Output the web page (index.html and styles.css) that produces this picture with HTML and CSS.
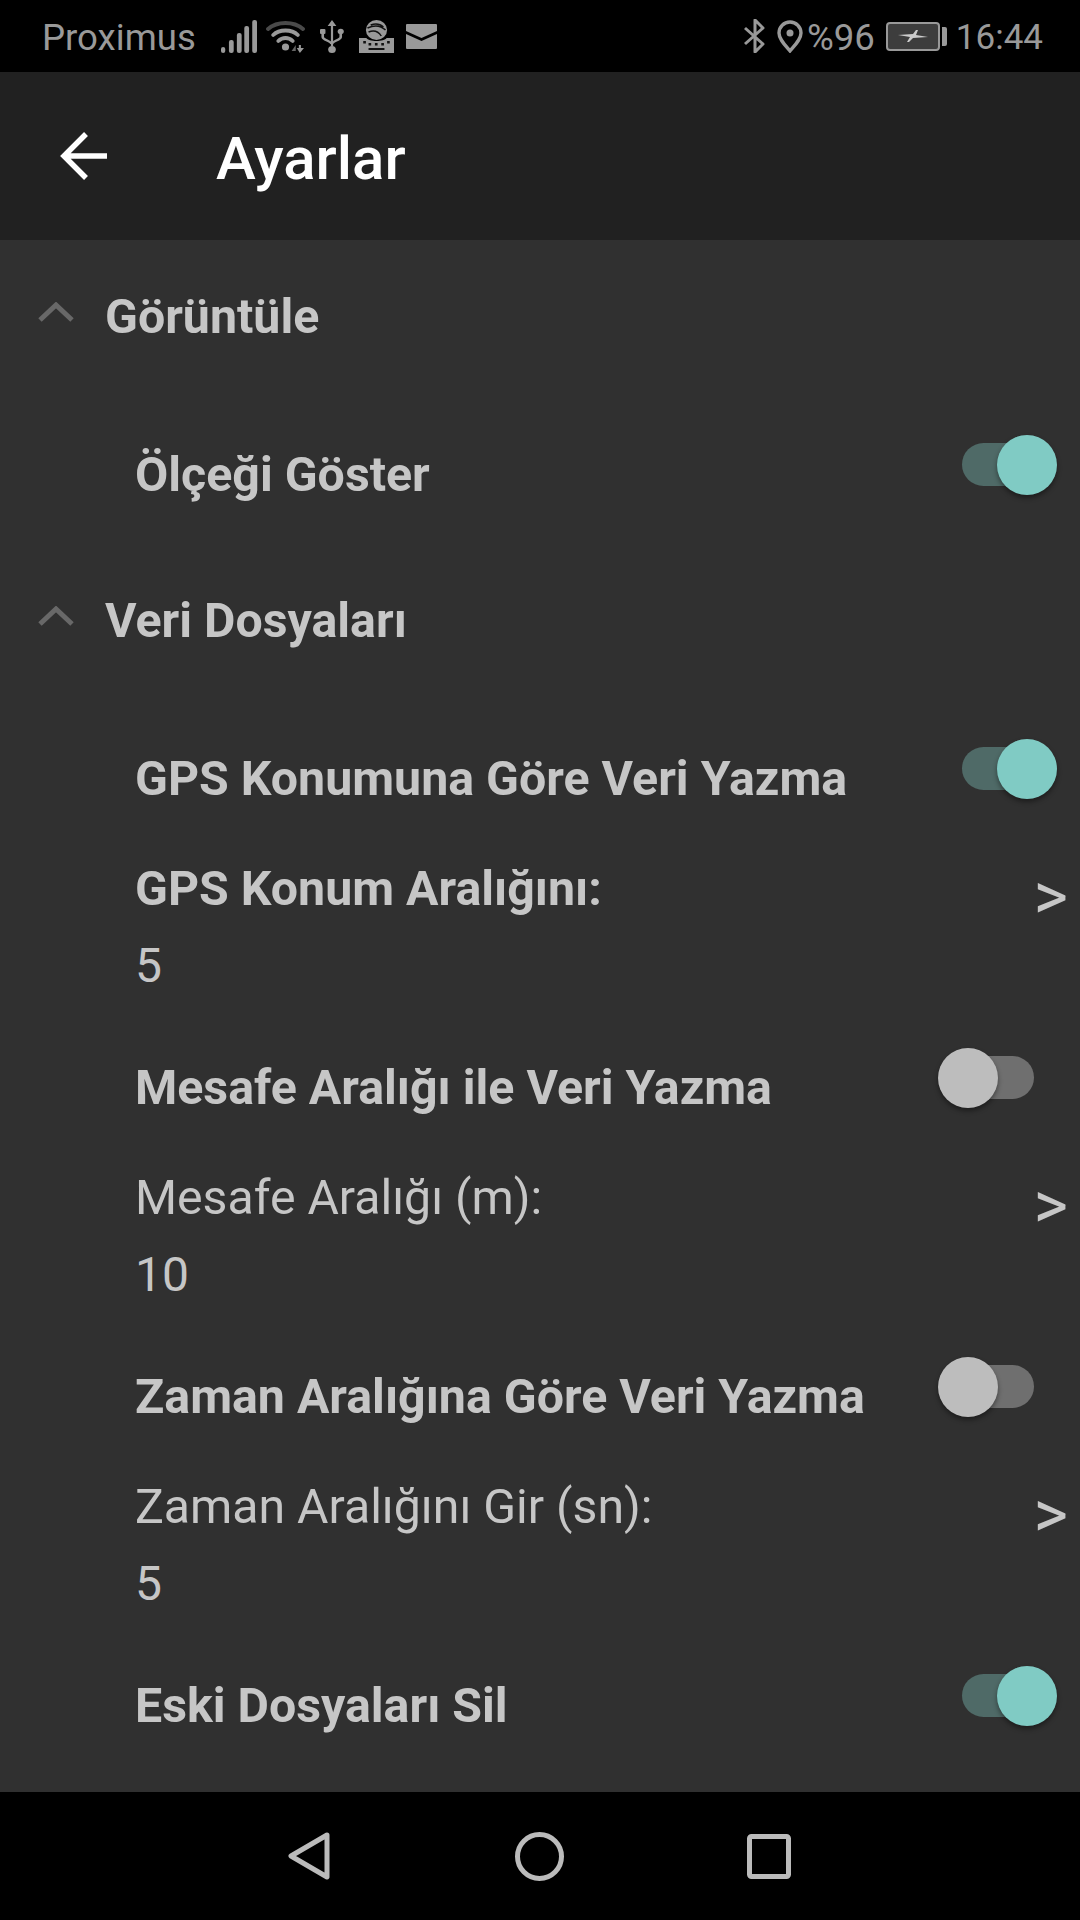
FILE: index.html
```html
<!DOCTYPE html>
<html lang="tr">
<head>
<meta charset="utf-8">
<title>Ayarlar</title>
<link rel="stylesheet" href="styles.css">
</head>
<body>
<div class="screen">
  <header class="status">
    <span class="carrier">Proximus</span>
    <svg class="ic ic-signal" viewBox="0 0 34 33" width="36" height="33" preserveAspectRatio="none"><g fill="#999"><rect x="0" y="27" width="4" height="6" rx="2"/><rect x="7.5" y="20" width="4.5" height="13" rx="2"/><rect x="15" y="13" width="4.5" height="20" rx="2"/><rect x="22" y="6" width="4.5" height="27" rx="2"/><rect x="29.500" y="0" width="4.500" height="33" rx="2"/></g></svg>
    <svg class="ic ic-wifi" viewBox="0 0 38 33" width="39" height="33" preserveAspectRatio="none"><g fill="none" stroke-linecap="round" stroke-width="3.800"><path d="M2 9C11 1 27 1 36 9" stroke="#4a4a4a"/><path d="M7 15C13 9 25 9 31 15" stroke="#999"/><path d="M12 21C16 17 22 17 26 21" stroke="#999"/></g><circle cx="19" cy="27" r="3.500" fill="#999"/><path d="M25 31l4-6v6z" fill="#666"/><path d="M32 25h2v3h3l-4 5-3-5h2z" fill="#999"/></svg>
    <svg class="ic ic-usb" viewBox="0 0 22 33" width="24" height="33" preserveAspectRatio="none"><g fill="#999"><path d="M11 0l4 6h-3v20h-2V6H7z"/><circle cx="11" cy="29.500" r="3.500"/><rect x="0" y="9" width="5" height="5" rx="1"/><circle cx="19" cy="11.500" r="2.800"/></g><path d="M2.500 13v4c0 3 8 4 8 7M19 13v4c0 3-8 4-8 7" fill="none" stroke="#999" stroke-width="2.400"/></svg>
    <svg class="ic ic-key" viewBox="0 0 33 33" width="35" height="33" preserveAspectRatio="none"><circle cx="16.500" cy="10" r="10" fill="#999"/><path d="M8 8c6-3 12-3 17 2M9 12c5-2 9-1 12 4M11 5c5-2 9-1 12 2" fill="none" stroke="#111" stroke-width="1.400"/><path d="M0 18h7c2 4 17 4 19 0h7v15H0z" fill="#999"/><g fill="#111"><rect x="4" y="21" width="2.500" height="2.500"/><rect x="9" y="23" width="2.500" height="2.500"/><rect x="15" y="23" width="2.500" height="2.500"/><rect x="21" y="23" width="2.500" height="2.500"/><rect x="26.500" y="21" width="2.500" height="2.500"/><rect x="9" y="28" width="15" height="2"/></g></svg>
    <svg class="ic ic-mail" viewBox="0 0 30 25" width="31" height="25" preserveAspectRatio="none"><path d="M1 0h28a1 1 0 0 1 1 1v6L15 14 0 7V1a1 1 0 0 1 1-1z" fill="#999"/><path d="M0 10l15 7 15-7v14a1 1 0 0 1-1 1H1a1 1 0 0 1-1-1z" fill="#999"/></svg>
    <span class="spacer"></span>
    <svg class="ic" viewBox="0 0 21 34" width="21" height="34"><path d="M1 9l18 16-8 8V1l8 8L1 25" fill="none" stroke="#999" stroke-width="3" stroke-linejoin="round"/></svg>
    <svg class="ic ic-pin" viewBox="0 0 26 33" width="26" height="33"><path d="M13 31C7 24 2 19 2 13a11 11 0 0 1 22 0c0 6-5 11-11 18z" fill="none" stroke="#999" stroke-width="3.400"/><circle cx="13" cy="13" r="3.500" fill="#999"/></svg>
    <span class="pct">%96</span>
    <svg class="ic ic-batt" viewBox="0 0 61 29" width="61" height="29"><rect x="1" y="1" width="52" height="27" rx="3" fill="#3d3d3d" stroke="#999" stroke-width="2"/><path d="M56 5h3a2 2 0 0 1 2 2v15a2 2 0 0 1-2 2h-3z" fill="#999"/><path d="M12 13l15-1 3-4 2 0-2 5 12 2-15 1-4 4-2 0 3-5z" fill="#ccc"/></svg>
    <span class="time">16:44</span>
  </header>

  <header class="toolbar">
    <svg class="back" viewBox="0 0 48 48" width="48" height="48"><path d="M47 24H4M26 2L4 24l22 22" fill="none" stroke="#fff" stroke-width="5.500"/></svg>
    <h1 class="title">Ayarlar</h1>
  </header>

  <main class="content">
    <section class="group">
      <div class="group-head">
        <svg class="chev" viewBox="0 0 36 20" width="36" height="20"><path d="M2 18L18 3l16 15" fill="none" stroke="#686868" stroke-width="5"/></svg>
        <span class="label">Görüntüle</span>
      </div>
      <div class="row switch-row">
        <span class="label">Ölçeği Göster</span>
        <span class="toggle on"><span class="thumb"></span></span>
      </div>
    </section>

    <section class="group">
      <div class="group-head next">
        <svg class="chev" viewBox="0 0 36 20" width="36" height="20"><path d="M2 18L18 3l16 15" fill="none" stroke="#686868" stroke-width="5"/></svg>
        <span class="label">Veri Dosyaları</span>
      </div>
      <div class="row switch-row">
        <span class="label">GPS Konumuna Göre Veri Yazma</span>
        <span class="toggle on"><span class="thumb"></span></span>
      </div>
      <div class="row value-row">
        <div class="value-text"><div class="label">GPS Konum Aralığını:</div><div class="value">5</div></div>
        <span class="more">&gt;</span>
      </div>
      <div class="row switch-row">
        <span class="label">Mesafe Aralığı ile Veri Yazma</span>
        <span class="toggle off"><span class="thumb"></span></span>
      </div>
      <div class="row value-row">
        <div class="value-text"><div class="label plain">Mesafe Aralığı (m):</div><div class="value">10</div></div>
        <span class="more">&gt;</span>
      </div>
      <div class="row switch-row">
        <span class="label">Zaman Aralığına Göre Veri Yazma</span>
        <span class="toggle off"><span class="thumb"></span></span>
      </div>
      <div class="row value-row">
        <div class="value-text"><div class="label plain">Zaman Aralığını Gir (sn):</div><div class="value">5</div></div>
        <span class="more">&gt;</span>
      </div>
      <div class="row switch-row">
        <span class="label">Eski Dosyaları Sil</span>
        <span class="toggle on"><span class="thumb"></span></span>
      </div>
    </section>
  </main>

  <nav class="navbar">
    <svg class="nav-back" viewBox="0 0 42 48" width="42" height="48"><path d="M39 3L3 24l36 21z" fill="none" stroke="#bbb" stroke-width="5" stroke-linejoin="round"/></svg>
    <svg class="nav-home" viewBox="0 0 49 49" width="49" height="49"><circle cx="24.500" cy="24.500" r="22" fill="none" stroke="#bbb" stroke-width="5"/></svg>
    <svg class="nav-recent" viewBox="0 0 44 45" width="44" height="45"><rect x="2.500" y="2.500" width="39" height="40" rx="2" fill="none" stroke="#bbb" stroke-width="5"/></svg>
  </nav>
</div>
</body>
</html>
```

FILE: styles.css
```css
* { box-sizing: border-box; }
html, body { margin: 0; padding: 0; }
body { background: #000; font-family: Roboto, "Noto Sans", sans-serif; }
.screen { width: 1080px; height: 1920px; display: flex; flex-direction: column; overflow: hidden; }

.status { height: 72px; flex: none; background: #000; color: #999; display: flex; align-items: center; padding: 0 37px 0 42px; font-size: 36.600px; }
.ic { display: block; flex: none; }
.carrier, .pct, .time { padding-top: 2px; }
.carrier { margin-right: 25px; }
.ic-wifi { margin-left: 9px; }
.ic-usb { margin-left: 15px; }
.ic-key { margin-left: 15px; }
.ic-mail { margin-left: 12px; }
.spacer { flex: 1; }
.ic-pin { margin-left: 12px; }
.pct { margin-left: 4px; }
.ic-batt { margin-left: 11px; }
.time { margin-left: 9px; font-size: 35px; }

.toolbar { height: 168px; flex: none; background: #212121; display: flex; align-items: center; padding-left: 60px; }
.back { display: block; flex: none; }
.title { margin: 4px 0 0 108px; font-size: 60px; font-weight: 500; color: #fff; }

.content { flex: 1; background: #303030; color: #c6c6c6; font-size: 48px; padding-top: 52px; }
.label { font-weight: 700; font-size: 48.300px; line-height: 48px; }
.label.plain { font-weight: 400; font-size: 48.200px; }
.group-head .label, .switch-row .label { padding-top: 2px; }

.group-head { height: 48px; display: flex; align-items: center; padding-left: 38px; }
.group-head.next { margin-top: 76px; }
.chev { display: block; flex: none; margin: -8px 31px 0 0; }

.row { display: flex; align-items: center; justify-content: space-between; padding-left: 135px; }
.switch-row { height: 92px; }
.group-head + .switch-row { margin-top: 88px; }
.value-row { height: 126px; }
.switch-row + .value-row { margin-top: 40px; }
.value-row + .switch-row { margin-top: 51px; }
.value { line-height: 48px; margin-top: 29px; }
.more { font-size: 66px; line-height: 60px; margin: -60px 12px 0 0; }

.toggle { position: relative; display: flex; width: 119px; height: 60px; margin: -18px 23px 0 0; }
.toggle::before { content: ""; position: absolute; left: 24px; top: 8px; width: 72px; height: 43px; border-radius: 22px; }
.thumb { position: relative; width: 60px; height: 60px; border-radius: 50%; box-shadow: 0 3px 5px rgba(0, 0, 0, .4); }
.toggle.on { justify-content: flex-end; }
.toggle.on::before { background: #4f6a67; }
.toggle.on .thumb { background: #80cbc4; }
.toggle.off { justify-content: flex-start; }
.toggle.off::before { background: #6f6f6f; }
.toggle.off .thumb { background: #bdbdbd; }

.navbar { height: 128px; flex: none; background: #000; display: flex; align-items: center; padding-left: 288px; }
.navbar svg { display: block; flex: none; }
.nav-home { margin-left: 185px; }
.nav-recent { margin-left: 183px; }
```
